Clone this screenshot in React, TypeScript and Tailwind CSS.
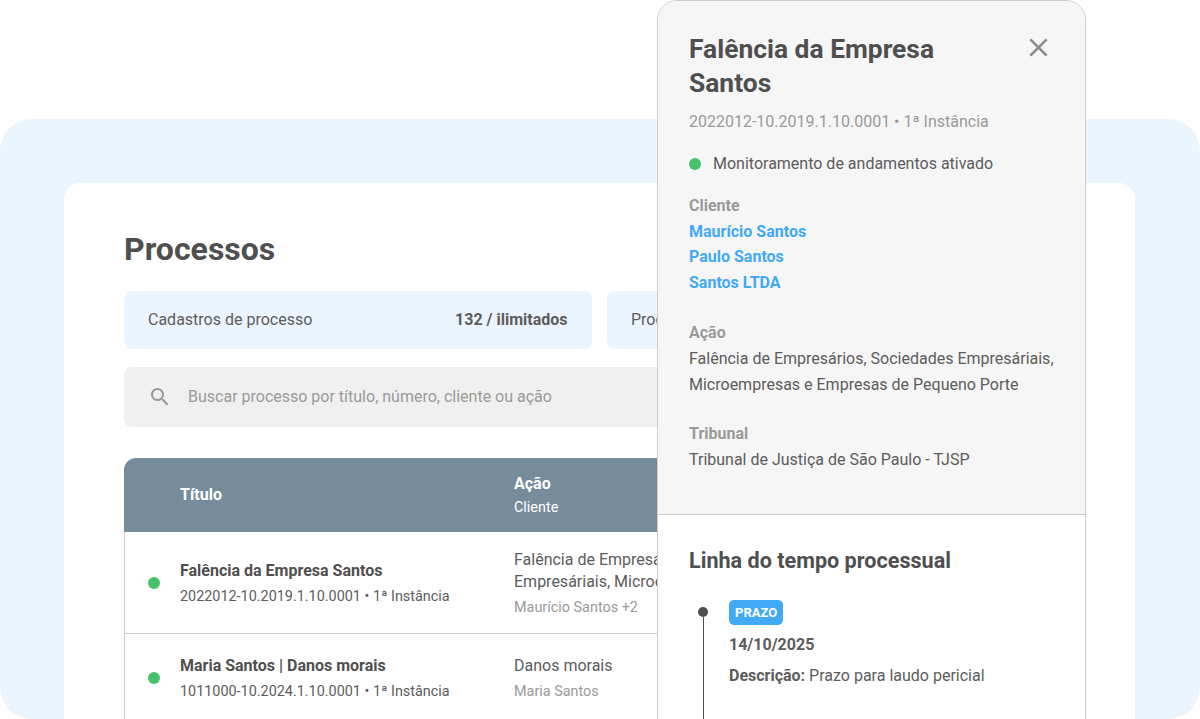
const font = 'font-["Roboto",sans-serif]';

function StatusDot() {
  return <span className="h-3 w-3 shrink-0 rounded-full bg-[#47c26b]" />;
}

interface RowProps {
  title: string;
  number: string;
  action: string[];
  client: string;
  last?: boolean;
}

function Row({ title, number, action, client, last }: RowProps) {
  return (
    <div className={`flex items-center border-x border-[#cccccc] ${last ? 'h-[88px]' : 'h-[102px] border-b pt-px'}`}>
      <div className="flex w-[55px] shrink-0 pl-[23px]">
        <StatusDot />
      </div>
      <div className="w-[334px] shrink-0">
        <div className="text-base leading-[22px] font-bold text-[#4f4f4f]">{title}</div>
        <div className="mt-[5px] text-[14.4px] leading-[20px] text-[#5c5c5c]">{number}</div>
      </div>
      <div className="whitespace-nowrap">
        {action.map((line) => (
          <div key={line} className="text-base leading-[22px] text-[#5c5c5c]">{line}</div>
        ))}
        <div className="mt-[5px] text-[14.4px] leading-[20px] text-[#9a9a9a]">{client}</div>
      </div>
    </div>
  );
}

function SidePanel() {
  return (
    <aside className="absolute top-0 left-[657px] h-[730px] w-[429px] overflow-hidden rounded-t-[20px] border border-[#cccccc] bg-white">
      <div className="h-[514px] border-b border-[#cccccc] bg-[#f6f6f6] px-[31px] pt-[31px]">
        <div className="flex items-start justify-between">
          <h2 className="w-[280px] text-[26.4px] leading-[34px] font-bold text-[#4f4f4f]">Falência da Empresa Santos</h2>
          <svg viewBox="0 0 24 24" className="h-[31px] w-[31px] shrink-0 fill-[#8c8c8c]">
            <path d="M19 6.41 17.59 5 12 10.59 6.41 5 5 6.41 10.59 12 5 17.59 6.41 19 12 13.41 17.59 19 19 17.59 13.41 12z" />
          </svg>
        </div>
        <div className="mt-[10px] text-base leading-[24px] text-[#9a9a9a]">2022012-10.2019.1.10.0001 • 1ª Instância</div>
        <div className="mt-[18px] flex items-center gap-3 text-base leading-[24px] text-[#5c5c5c]">
          <StatusDot />
          Monitoramento de andamentos ativado
        </div>
        <div className="mt-[18px] text-base leading-[24px] font-bold text-[#9a9a9a]">Cliente</div>
        <div className="mt-[0.5px] text-base leading-[25.5px] font-bold text-[#42a9f5]">
          <div>Maurício Santos</div>
          <div>Paulo Santos</div>
          <div>Santos LTDA</div>
        </div>
        <div className="mt-[26px] text-base leading-[24px] font-bold text-[#9a9a9a]">Ação</div>
        <div className="mt-px text-base leading-[26px] text-[#5c5c5c]">
          Falência de Empresários, Sociedades Empresáriais, Microempresas e Empresas de Pequeno Porte
        </div>
        <div className="mt-[24px] text-base leading-[24px] font-bold text-[#9a9a9a]">Tribunal</div>
        <div className="mt-px text-base leading-[26px] text-[#5c5c5c]">Tribunal de Justiça de São Paulo - TJSP</div>
      </div>
      <div className="px-[31px] pt-[29px]">
        <h3 className="text-[21.6px] leading-[34px] font-bold text-[#4f4f4f]">Linha do tempo processual</h3>
        <div className="mt-[22px] flex">
          <div className="flex w-[40px] shrink-0 flex-col items-center pt-[7px] pr-[12px]">
            <span className="h-[10px] w-[10px] rounded-full bg-[#4f4f4f]" />
            <span className="h-[120px] w-px bg-[#4f4f4f]" />
          </div>
          <div>
            <span className="block w-fit rounded-[5px] bg-[#42a9f5] px-[6px] text-[13px] leading-[25px] font-bold text-white">PRAZO</span>
            <div className="mt-[8px] text-base leading-[24px] font-bold text-[#5c5c5c]">14/10/2025</div>
            <div className="mt-[7px] text-base leading-[24px] text-[#5c5c5c]"><b className="font-bold">Descrição:</b> Prazo para laudo pericial</div>
          </div>
        </div>
      </div>
    </aside>
  );
}

export default function App() {
  return (
    <div className={`relative h-[719px] w-[1200px] overflow-hidden bg-white pt-[119px] ${font}`}>
      <div className="h-[600px] rounded-[32px] bg-[#ebf5ff] px-[64px] pt-[64px]">
        <div className="h-[700px] w-[1071px] rounded-[16px] bg-white px-[60px] pt-[46px]">
          <h1 className="text-[32px] leading-[40px] font-bold text-[#4f4f4f]">Processos</h1>
          <div className="mt-[22px] flex gap-[15.5px]">
            <div className="flex h-[58px] w-[467.5px] items-center justify-between rounded-[8px] bg-[#ebf5ff] px-6 text-base text-[#5c5c5c]">
              <span>Cadastros de processo</span>
              <span className="font-bold">132 / ilimitados</span>
            </div>
            <div className="flex h-[58px] w-[467.5px] items-center rounded-[8px] bg-[#ebf5ff] px-6 text-base text-[#5c5c5c]">
              <span>Processos monitorados</span>
            </div>
          </div>
          <div className="mt-[18px] flex h-[60px] items-center rounded-[8px] bg-[#f0f0f0] pl-6 text-base text-[#9a9a9a]">
            <svg viewBox="0 0 24 24" className="h-6 w-6 shrink-0 fill-[#9a9a9a]">
              <path d="M15.5 14h-.79l-.28-.27C15.41 12.59 16 11.11 16 9.5 16 5.91 13.09 3 9.5 3S3 5.91 3 9.5 5.91 16 9.5 16c1.61 0 3.09-.59 4.23-1.57l.27.28v.79l5 4.99L20.49 19l-4.99-5zm-6 0C7.01 14 5 11.99 5 9.5S7.01 5 9.5 5 14 7.01 14 9.5 11.99 14 9.5 14z" />
            </svg>
            <span className="ml-4">Buscar processo por título, número, cliente ou ação</span>
          </div>
          <div className="mt-[31px] overflow-hidden rounded-t-[12px]">
            <div className="flex h-[74px] items-center bg-[#778c9b] text-white">
              <div className="w-[56px] shrink-0" />
              <div className="w-[334px] shrink-0 text-base leading-[22px] font-bold">Título</div>
              <div>
                <div className="text-base leading-[22px] font-bold">Ação</div>
                <div className="mt-[3px] text-[14.4px] leading-[20px]">Cliente</div>
              </div>
            </div>
            <Row
              title="Falência da Empresa Santos"
              number="2022012-10.2019.1.10.0001 • 1ª Instância"
              action={['Falência de Empresários, Sociedades', 'Empresáriais, Microempresas']}
              client="Maurício Santos +2"
            />
            <Row
              last
              title="Maria Santos | Danos morais"
              number="1011000-10.2024.1.10.0001 • 1ª Instância"
              action={['Danos morais']}
              client="Maria Santos"
            />
          </div>
        </div>
      </div>
      <SidePanel />
    </div>
  );
}
